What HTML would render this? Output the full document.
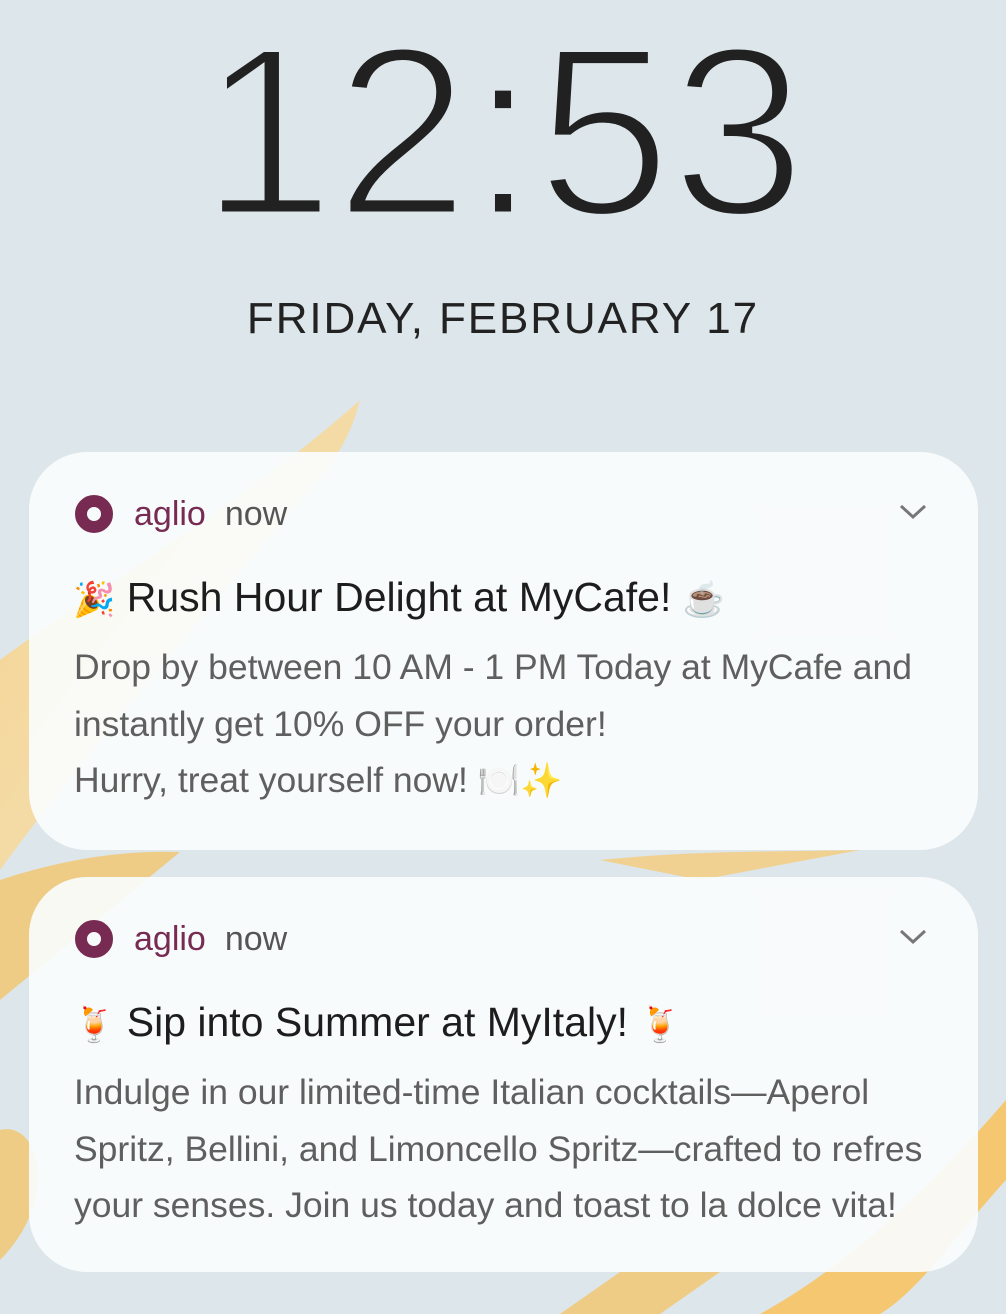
<!DOCTYPE html>
<html><head><meta charset="utf-8"><style>
html,body{margin:0;padding:0}
body{width:1006px;height:1314px;position:relative;overflow:hidden;background:#dde6ea;font-family:"Liberation Sans",sans-serif}
.bg{position:absolute;left:0;top:0}
.clock{position:absolute;left:0;width:1006px;top:-3px;text-align:center;font-size:242px;line-height:270px;color:#212121;letter-spacing:0px;-webkit-text-stroke:7px #dde6ea}
.date{position:absolute;left:0;width:1006px;top:292px;text-align:center;font-size:44px;line-height:54px;color:#222;letter-spacing:1.9px}
.card{position:absolute;left:29px;width:949px;border-radius:58px;background:rgba(250,252,252,0.93)}
.hdr{position:absolute;left:46px;top:42px;height:40px;display:flex;align-items:center;font-size:34px}
.ring{width:14px;height:14px;border:12px solid #772b52;border-radius:50%;margin-right:21px}
.app{color:#772b52;margin-right:19px}
.now{color:#555}
.chev{position:absolute;right:50px;top:50px}
.title{position:absolute;left:44px;font-size:41px;color:#1d1d1d;white-space:nowrap}
.body{position:absolute;left:45px;font-size:35.5px;line-height:56.5px;color:#5f5f5f;white-space:nowrap}
.emo{font-family:"Noto Color Emoji","DejaVu Sans",sans-serif;font-size:34px}
</style></head><body>
<svg class="bg" width="1006" height="1314" viewBox="0 0 1006 1314">
<defs><linearGradient id="g" x1="0" y1="0" x2="1" y2="1"><stop offset="0" stop-color="#f6cf82"/><stop offset="1" stop-color="#fbe3b0"/></linearGradient></defs>
<path d="M0 660 C80 600 250 500 360 400 C350 440 330 470 300 500 C200 620 80 760 0 870Z" fill="url(#g)" opacity="0.85"/>
<path d="M0 880 C60 860 120 850 180 852 L0 1000Z" fill="#f4c56c" opacity="0.8"/>
<path d="M0 1130 C40 1120 60 1200 0 1260Z" fill="#f4c56c" opacity="0.8"/>
<path d="M600 860 C700 850 780 852 860 850 L700 880Z" fill="#f5cc7a" opacity="0.8"/>
<path d="M760 1314 C840 1270 920 1200 1006 1100 L1006 1180 C960 1230 920 1290 880 1314Z" fill="#f5c770"/>
<path d="M560 1314 L620 1272 L720 1272 L660 1314Z" fill="#f4c56c" opacity="0.8"/>
</svg>
<div class="clock">12:53</div>
<div class="date">FRIDAY, FEBRUARY 17</div>

<div class="card" style="top:452px;height:398px">
 <div class="hdr"><div class="ring"></div><span class="app">aglio</span><span class="now">now</span></div>
 <svg class="chev" width="30" height="20" viewBox="0 0 30 20"><path d="M3 4 L15 15 L27 4" fill="none" stroke="#777" stroke-width="3"/></svg>
 <div class="title" style="top:122px"><span class="emo">🎉</span> Rush Hour Delight at MyCafe! <span class="emo">☕</span></div>
 <div class="body" style="top:187px">Drop by between 10 AM - 1 PM Today at MyCafe and<br>instantly get 10% OFF your order!<br>Hurry, treat yourself now! <span class="emo">🍽️✨</span></div>
</div>

<div class="card" style="top:877px;height:395px">
 <div class="hdr"><div class="ring"></div><span class="app">aglio</span><span class="now">now</span></div>
 <svg class="chev" width="30" height="20" viewBox="0 0 30 20"><path d="M3 4 L15 15 L27 4" fill="none" stroke="#777" stroke-width="3"/></svg>
 <div class="title" style="top:122px"><span class="emo">🍹</span> Sip into Summer at MyItaly! <span class="emo">🍹</span></div>
 <div class="body" style="top:187px">Indulge in our limited-time Italian cocktails—Aperol<br>Spritz, Bellini, and Limoncello Spritz—crafted to refres<br>your senses. Join us today and toast to la dolce vita!</div>
</div>
</body></html>
